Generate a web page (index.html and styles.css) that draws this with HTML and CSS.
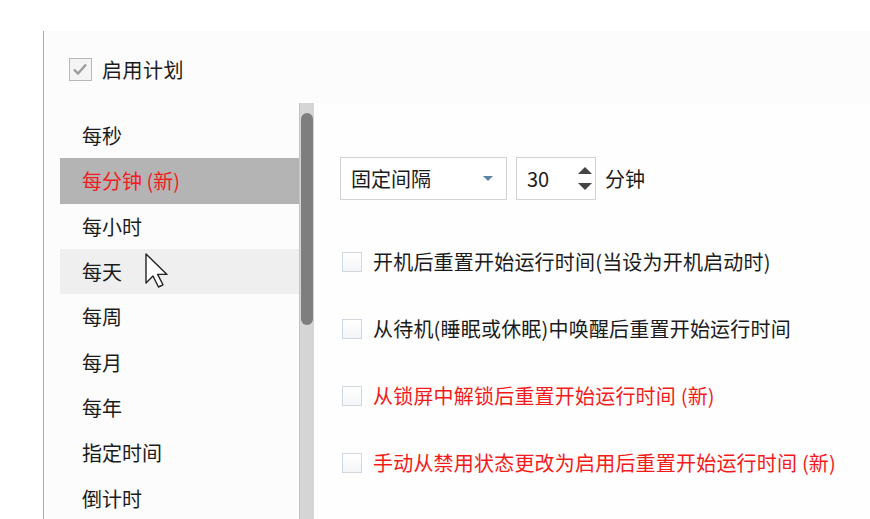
FILE: index.html
```html
<!DOCTYPE html>
<html lang="zh-CN">
<head>
<meta charset="utf-8">
<title>计划</title>
<link rel="stylesheet" href="styles.css">
</head>
<body>
<div class="page">
  <div class="panel">
    <label class="enable">
      <span class="cb cb-disabled">
        <svg viewBox="0 0 22 22" width="22" height="22"><path d="M5 11.5 L9 15.5 L17 6.5" fill="none" stroke="#9c9c9c" stroke-width="2.4"/></svg>
      </span>
      <span class="enable-text">启用计划</span>
    </label>
    <div class="body">
      <div class="sidebar">
        <ul class="list">
          <li class="item">每秒</li>
          <li class="item selected">每分钟 (新)</li>
          <li class="item">每小时</li>
          <li class="item hover">每天</li>
          <li class="item">每周</li>
          <li class="item">每月</li>
          <li class="item">每年</li>
          <li class="item">指定时间</li>
          <li class="item">倒计时</li>
        </ul>
        <div class="scrollbar"><div class="thumb"></div></div>
      </div>
      <div class="content">
        <div class="controls">
          <div class="select">
            <span>固定间隔</span>
            <span class="caret"></span>
          </div>
          <div class="spin">
            <span>30</span>
            <span class="arrows"><span class="up"></span><span class="down"></span></span>
          </div>
          <span class="unit">分钟</span>
        </div>
        <div class="options">
          <label class="opt"><span class="cb"></span><span>开机后重置开始运行时间(当设为开机启动时)</span></label>
          <label class="opt"><span class="cb"></span><span>从待机(睡眠或休眠)中唤醒后重置开始运行时间</span></label>
          <label class="opt red"><span class="cb"></span><span>从锁屏中解锁后重置开始运行时间 (新)</span></label>
          <label class="opt red"><span class="cb"></span><span>手动从禁用状态更改为启用后重置开始运行时间 (新)</span></label>
        </div>
      </div>
    </div>
  </div>
  <svg class="cursor" width="24" height="36" viewBox="0 0 24 36">
    <path d="M1 1 L1 30 L8 23 L13.5 34 L18 31.8 L12.6 21.4 L22 21.4 Z" fill="#fff" stroke="#222" stroke-width="1.4" stroke-linejoin="round"/>
  </svg>
</div>
</body>
</html>
```

FILE: styles.css
```css
* { box-sizing: border-box; }
html, body { margin: 0; padding: 0; }
body {
  background: #ffffff;
  font-family: "Noto Sans CJK SC", "Noto Sans", sans-serif;
  font-size: 20px;
  color: #1b1b1b;
  width: 870px;
  height: 519px;
  overflow: hidden;
}
.page {
  position: relative;
  padding: 31px 0 0 43px;
  height: 519px;
}
.panel {
  height: 488px;
  border-left: 1px solid #a9a9a9;
  background: #fcfcfc;
  display: flex;
  flex-direction: column;
}
.enable {
  display: flex;
  align-items: center;
  gap: 10px;
  margin: 27px 0 0 25px;
  height: 23px;
}
.enable-text { line-height: 23px; letter-spacing: 0.5px; }
.cb {
  display: inline-block;
  width: 20px;
  height: 20px;
  border: 1px solid #cfd8e0;
  background: linear-gradient(#ffffff, #f3f5f7);
  flex: none;
}
.cb-disabled {
  width: 23px;
  height: 23px;
  border: 1px solid #b8b8b8;
  background: #f4f4f4;
  display: flex;
}
.cb-disabled svg { display: block; margin: -1px 0 0 -1px; }
.body {
  display: flex;
  margin-top: 22px;
  flex: 1;
}
.sidebar {
  width: 270px;
  display: flex;
  padding-left: 16px;
}
.list {
  list-style: none;
  margin: 0;
  padding: 10px 0 0 0;
  width: 239px;
}
.item {
  height: 45.3px;
  display: flex;
  align-items: center;
  padding-left: 22px;
}
.item.selected {
  background: #b4b4b4;
  color: #f21c1c;
}
.item.hover { background: #efefef; }
.scrollbar {
  width: 15px;
  background: #d5d5d5;
  border-left: 1px solid #c4c4c4;
  padding: 10px 1px 0 1px;
}
.thumb {
  height: 212px;
  background: #7e7e7e;
  border-radius: 6px;
}
.content {
  flex: 1;
  background: #fefefe;
  padding: 54px 0 0 26px;
}
.controls {
  display: flex;
  align-items: center;
  height: 43px;
}
.select {
  width: 167px;
  height: 43px;
  border: 1px solid #d3d3d3;
  background: #fff;
  display: flex;
  align-items: center;
  justify-content: space-between;
  padding: 0 13px 0 10px;
}
.caret {
  width: 0;
  height: 0;
  border-left: 5px solid transparent;
  border-right: 5px solid transparent;
  border-top: 5px solid #5f83a3;
}
.spin {
  margin-left: 9px;
  width: 80px;
  height: 43px;
  border: 1px solid #d3d3d3;
  background: #fff;
  display: flex;
  align-items: center;
  justify-content: space-between;
  padding: 0 3px 0 10px;
}
.arrows {
  display: flex;
  flex-direction: column;
  gap: 9px;
}
.up, .down {
  width: 0;
  height: 0;
  border-left: 7px solid transparent;
  border-right: 7px solid transparent;
}
.up { border-bottom: 7px solid #444; }
.down { border-top: 7px solid #444; }
.unit { margin-left: 9px; }
.options {
  margin-top: 28px;
  display: flex;
  flex-direction: column;
}
.opt {
  height: 67px;
  display: flex;
  align-items: center;
  gap: 11px;
  padding-left: 2px;
}
.opt > span:last-child { letter-spacing: 0.2px; }
.opt.red { color: #f51a1a; }
.cursor {
  position: absolute;
  left: 145px;
  top: 253px;
}
```
